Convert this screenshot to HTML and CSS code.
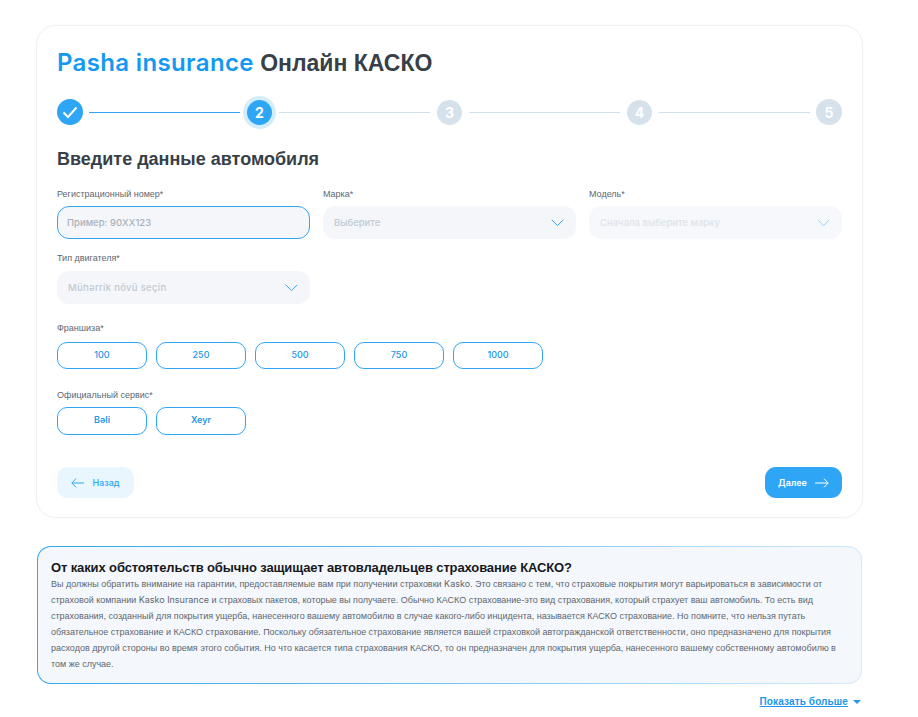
FILE: index.html
```html
<!DOCTYPE html>
<html lang="ru">
<head>
<meta charset="utf-8">
<title>Pasha insurance Онлайн КАСКО</title>
<link rel="stylesheet" href="styles.css">
</head>
<body>
<main class="page">
  <section class="card">
    <h1 class="title"><span class="brand">Pasha insurance</span> Онлайн КАСКО</h1>
    <div class="stepper">
      <span class="step done"><svg width="16" height="16" viewBox="0 0 16 16" fill="none"><path d="M1.5 8.5 6 13 14.5 3.5" stroke="#fff" stroke-width="2"/></svg></span>
      <span class="line active"></span>
      <span class="step current">2</span>
      <span class="line"></span>
      <span class="step">3</span>
      <span class="line"></span>
      <span class="step">4</span>
      <span class="line"></span>
      <span class="step last">5</span>
    </div>
    <h2 class="subtitle">Введите данные автомобиля</h2>
    <div class="fields">
      <div class="field first">
        <div class="label">Регистрационный номер*</div>
        <div class="control focus"><span class="ph">Пример: 90XX123</span></div>
      </div>
      <div class="field first">
        <div class="label">Марка*</div>
        <div class="control"><span class="ph sel">Выберите</span>
          <svg class="chev" width="13" height="8" viewBox="0 0 13 8" fill="none"><path d="M.7.8 6.5 6.6 12.3.8" stroke="#2ea6f5" stroke-width="1"/></svg></div>
      </div>
      <div class="field first">
        <div class="label">Модель*</div>
        <div class="control off"><span class="ph sel">Сначала выберите марку</span>
          <svg class="chev" width="13" height="8" viewBox="0 0 13 8" fill="none"><path d="M.7.8 6.5 6.6 12.3.8" stroke="#2ea6f5" stroke-width="1"/></svg></div>
      </div>
      <div class="field">
        <div class="label">Тип двигателя*</div>
        <div class="control"><span class="ph sel wide">Mühərrik növü seçin</span>
          <svg class="chev" width="13" height="8" viewBox="0 0 13 8" fill="none"><path d="M.7.8 6.5 6.6 12.3.8" stroke="#2ea6f5" stroke-width="1"/></svg></div>
      </div>
    </div>
    <div class="label group-a">Франшиза*</div>
    <div class="options">
      <button class="opt">100</button>
      <button class="opt">250</button>
      <button class="opt">500</button>
      <button class="opt">750</button>
      <button class="opt">1000</button>
    </div>
    <div class="label group-b">Официальный сервис*</div>
    <div class="options tall">
      <button class="opt">Bəli</button>
      <button class="opt">Xeyr</button>
    </div>
    <div class="nav">
      <button class="btn back"><svg width="13" height="10" viewBox="0 0 13 10" fill="none"><path d="M13 5H.8M5 .7.8 5 5 9.3" stroke="#2ea6f5" stroke-width="1"/></svg><span>Назад</span></button>
      <button class="btn next"><span>Далее</span><svg width="14" height="10" viewBox="0 0 14 10" fill="none"><path d="M0 5h13.2M9 .7 13.2 5 9 9.3" stroke="#fff" stroke-width="1"/></svg></button>
    </div>
  </section>
  <section class="info">
    <h3 class="info-title">От каких обстоятельств обычно защищает автовладельцев страхование КАСКО?</h3>
    <p class="info-text">Вы должны обратить внимание на гарантии, предоставляемые вам при получении страховки <span class="latin">Kasko</span>. Это связано с тем, что страховые покрытия могут варьироваться в зависимости от<br>страховой компании <span class="latin">Kasko Insurance</span> и страховых пакетов, которые вы получаете. Обычно КАСКО страхование-это вид страхования, который страхует ваш автомобиль. То есть вид<br>страхования, созданный для покрытия ущерба, нанесенного вашему автомобилю в случае какого-либо инцидента, называется КАСКО страхование. Но помните, что нельзя путать<br>обязательное страхование и КАСКО страхование. Поскольку обязательное страхование является вашей страховкой автогражданской ответственности, оно предназначено для покрытия<br>расходов другой стороны во время этого события. Но что касается типа страхования КАСКО, то он предназначен для покрытия ущерба, нанесенного вашему собственному автомобилю в<br>том же случае.</p>
  </section>
  <div class="more"><a class="more-link" href="#">Показать больше</a><span class="caret"></span></div>
</main>
</body>
</html>
```
FILE: styles.css
```css
* { box-sizing: border-box; }
html, body { margin: 0; background: #fff; }
body { font-family: "Liberation Sans", Arial, sans-serif; color: #373f49; }
.page { padding: 25px 55px 0 36px; height: 717px; overflow: hidden; }
.card {
  height: 493px;
  border: 1px solid #eef0f3;
  border-radius: 20px;
  padding: 20px 20px 0;
  box-shadow: 0 0 3px rgba(30, 60, 90, .04);
}
.title { margin: 0; height: 35px; font-size: 23px; line-height: 34px; font-weight: 700; color: #373f49; white-space: nowrap; }
.brand { font-family: Inter, sans-serif; font-size: 24px; font-weight: 600; color: #1499f3; letter-spacing: .35px; }
.stepper { display: flex; align-items: center; height: 26px; margin-top: 18px; }
.step {
  flex: none; width: 25px; height: 25px; border-radius: 50%;
  background: #d5e2ec; color: #fff;
  display: flex; align-items: center; justify-content: center;
  font: 700 14px Inter, sans-serif;
}
.step.done, .step.last { width: 26px; height: 26px; }
.step.done { background: #2ea6f5; }
.step.current { background: #2ea6f5; box-shadow: 0 0 0 4px #d4edfd; }
.line { flex: 1; height: 1px; background: #d0e1ee; margin: 0 7px; }
.line.active { background: #2ea6f5; margin-left: 6px; }
.line:nth-last-child(2) { margin-right: 6px; }
.subtitle { margin: 22px 0 0; height: 24px; font-size: 18px; line-height: 24px; font-weight: 700; color: #373f49; }
.fields { display: grid; grid-template-columns: repeat(3, 1fr); gap: 12px 13px; margin-top: 16px; }
.label { height: 14px; font-size: 9px; line-height: 14px; color: #5e6670; white-space: nowrap; }
.control {
  height: 33px; margin-top: 6px; border-radius: 12px; background: #f4f6fa;
  display: flex; align-items: center; justify-content: space-between;
  padding: 0 11px 0 10px; border: 1px solid transparent;
}
.first .control { margin-top: 5px; }
.control.focus { border-color: #2ea6f5; padding-left: 9px; }
.control.off { background: #f7f8fb; }
.control.off .chev { opacity: .45; }
.control.off .ph { color: #dde3ea; }
.ph { font: 500 9.5px Inter, sans-serif; color: #a9b2bc; }
.ph.sel { color: #c2cad3; }
.ph.wide { letter-spacing: .3px; }
.latin { font-family: Inter, sans-serif; }
.group-a { margin-top: 17px; }
.group-b { margin-top: 19px; }
.options { display: flex; gap: 9px; margin-top: 7px; }
.options.tall { margin-top: 5px; }
.opt {
  width: 90px; height: 27px; padding: 0 0 2px; border: 1px solid #2ea6f5; border-radius: 10px;
  background: #fff; color: #2196ea; font: 500 9px Inter, sans-serif;
}
.options.tall .opt { height: 28px; padding-bottom: 3px; font-weight: 600; }
.nav { display: flex; justify-content: space-between; margin-top: 32px; }
.btn {
  width: 77px; height: 31px; border: 0; border-radius: 11px; padding: 0;
  display: flex; align-items: center; justify-content: center; gap: 8px;
  font: 500 9px Inter, sans-serif;
}
.back { background: #e9f6fe; color: #2ea6f5; }
.next { background: #2ea6f5; color: #fff; font-weight: 600; }
.info {
  height: 138px; margin: 28px 1px 0 1px; padding: 12px 13px 0;
  border: 1px solid transparent; border-radius: 14px;
  background: linear-gradient(#f4f8fc, #f4f8fc) padding-box,
              linear-gradient(100deg, #2ea6f5 0%, #5fbaf5 40%, #d5ecfc 100%) border-box;
}
.info-title { margin: 0; height: 17px; font-size: 13px; line-height: 17px; font-weight: 700; color: #17191c; letter-spacing: -.12px; }
.info-text { margin: 0; font-size: 9px; line-height: 16px; color: #5e6670; white-space: nowrap; letter-spacing: -.01px; }
.more { display: flex; justify-content: flex-end; align-items: center; gap: 5px; height: 14px; margin: 11px 1px 0 0; }
.more-link { font-size: 10px; line-height: 14px; font-weight: 700; color: #2196ea; text-decoration: underline; letter-spacing: .12px; }
.caret { width: 0; height: 0; border: 4px solid transparent; border-top: 4px solid #2196ea; border-bottom: 0; margin-right: 1px; }
```
